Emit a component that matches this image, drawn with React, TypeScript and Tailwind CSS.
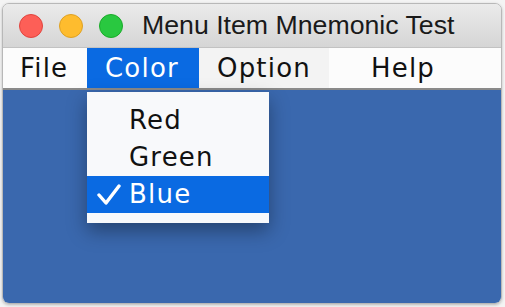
import React from "react";

export default function App() {
  const menuFont = { fontFamily: '"DejaVu Sans", "Noto Sans", sans-serif' };
  return (
    <div className="w-[505px] h-[307px] bg-[#f4f4f4] pt-[3px] pl-[2px] overflow-hidden">
      <div className="relative w-[500px] h-[301px] rounded-[7px] overflow-hidden border border-[#b8b8b8] flex flex-col shadow-[0_1px_3px_rgba(0,0,0,0.25)]">
        {/* title bar */}
        <div className="h-[44px] shrink-0 flex items-center bg-gradient-to-b from-[#ebebeb] to-[#d5d5d5] border-b border-[#c2c2c2]">
          <div className="flex items-center gap-[16px] pl-[16px]">
            <div className="w-[24px] h-[24px] rounded-full bg-[#fd5f57] border border-[#e0443e]" />
            <div className="w-[24px] h-[24px] rounded-full bg-[#febc2e] border border-[#dea123]" />
            <div className="w-[24px] h-[24px] rounded-full bg-[#29c840] border border-[#1aab29]" />
          </div>
          <div
            className="ml-[19px] text-[26.7px] leading-none text-[#1a1a1a]"
            style={{ fontFamily: '"Liberation Sans", Arial, sans-serif' }}
          >
            Menu Item Mnemonic Test
          </div>
        </div>
        {/* menu bar */}
        <div
          className="h-[42px] shrink-0 flex bg-[#fcfcfc] border-b-[2px] border-[#8a8a8a] text-[26px] tracking-[1.2px] text-[#111]"
          style={menuFont}
        >
          <div className="w-[84px] flex items-center pl-[17px]">File</div>
          <div className="w-[112px] flex items-center pl-[18px] bg-[#0a6ae2] text-white">Color</div>
          <div className="w-[130px] flex items-center pl-[18px] bg-[#f3f3f3]">Option</div>
          <div className="w-[124px] flex items-center pl-[42px]">Help</div>
        </div>
        {/* content */}
        <div className="flex-1 bg-[#3a68ae]" />
        {/* dropdown */}
        <div
          className="absolute left-[84px] top-[88px] w-[182px] bg-[#f8f9fb] pt-[10px] pb-[10px] shadow-[0_8px_18px_rgba(0,0,0,0.35)] text-[26px] tracking-[1.2px] text-[#111]"
          style={menuFont}
        >
          <div className="h-[37px] flex items-center pl-[42px]">Red</div>
          <div className="h-[37px] flex items-center pl-[42px]">Green</div>
          <div className="relative h-[37px] flex items-center pl-[42px] bg-[#0a6ae2] text-white">
            <svg
              className="absolute left-[10px] top-[8px]"
              width="24"
              height="22"
              viewBox="0 0 24 22"
            >
              <path
                d="M2 11 L9 19 L22 2"
                fill="none"
                stroke="white"
                strokeWidth="3.4"
                strokeLinecap="round"
                strokeLinejoin="round"
              />
            </svg>
            Blue
          </div>
        </div>
      </div>
    </div>
  );
}
